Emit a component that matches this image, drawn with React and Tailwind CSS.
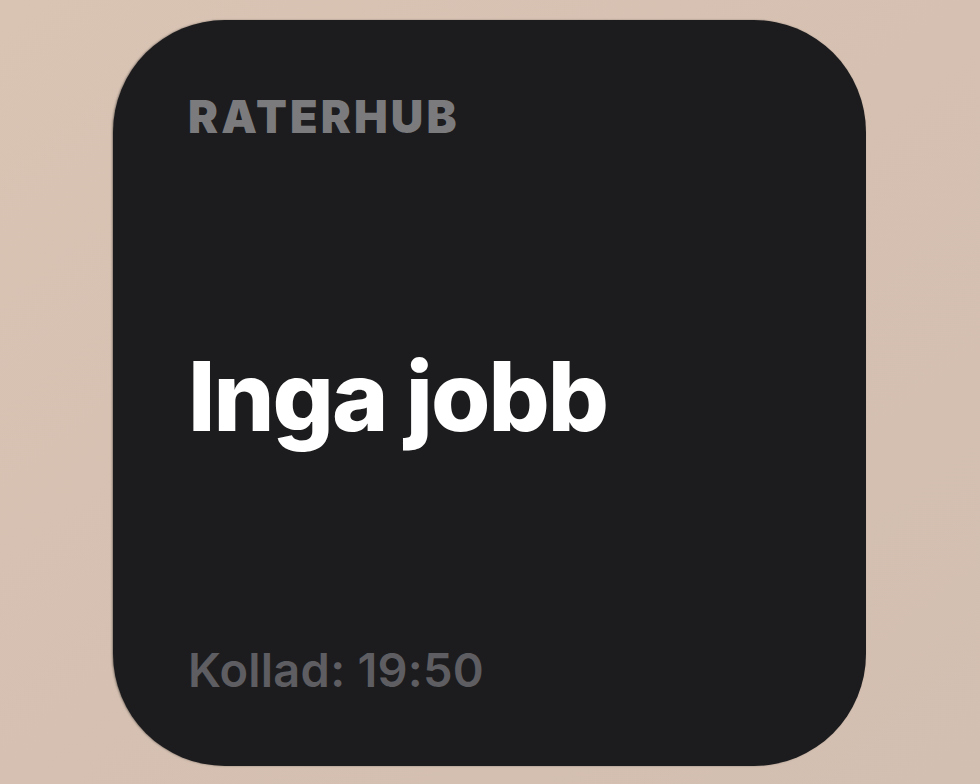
export default function App() {
  return (
    <div className="w-[980px] h-[784px] overflow-hidden bg-gradient-to-br from-[#d9c4b4] via-[#d5c0b1] to-[#d3bfb1] pt-[20px] pl-[113px]">
      <div
        className="w-[753px] h-[746px] rounded-[112px] bg-[#1c1c1e] flex flex-col pl-[75px] shadow-[-1px_0_2px_rgba(0,0,0,0.35)]"
        style={{ fontFamily: "Inter, 'Noto Sans', sans-serif" }}
      >
        <div className="mt-[74px] text-[45px] leading-none font-black tracking-[0.07em] text-[#7b7b7e]">
          RATERHUB
        </div>
        <div className="mt-[209px] text-[96px] leading-none font-extrabold tracking-[-0.02em] text-white">
          Inga jobb
        </div>
        <div className="mt-auto mb-[73px] text-[47px] leading-none font-semibold tracking-[0.005em] text-[#5e5e62]">
          Kollad: 19:50
        </div>
      </div>
    </div>
  );
}
